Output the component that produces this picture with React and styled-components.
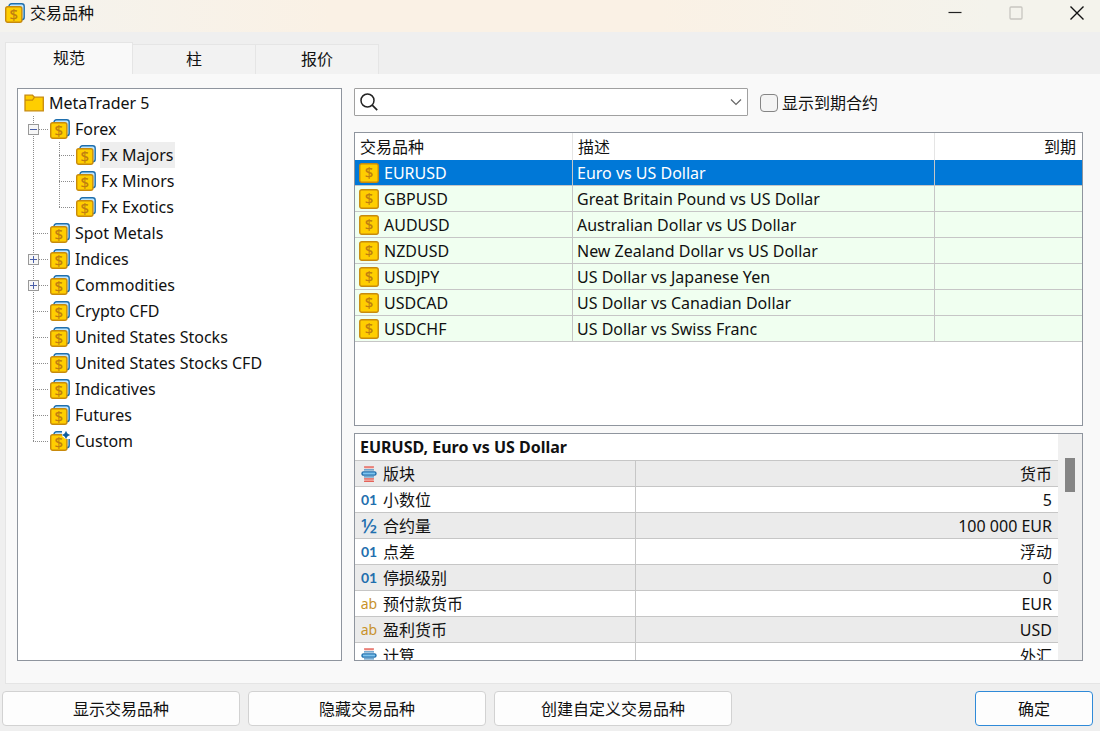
import { useState } from "react";
import styled, { createGlobalStyle, css } from "styled-components";

const colours = {
  TEXT: "#111111",
  WINDOW: "#efefef",
  PANEL: "#f9f9f9",
  WHITE: "#ffffff",
  FRAME: "#8f959e",
  LINE: "#c6c6c6",
  SOFT: "#e5e5e5",
  ROW: "#f0fff0",
  STRIPE: "#ebebeb",
  SELECTED: "#0078d7",
  GOLD: "#ffce00",
  GOLD_DARK: "#c88a0c",
  BLUE: "#1f6fae",
  RED: "#e0483e",
};

const fonts = `"Noto Sans", "Noto Sans CJK SC", sans-serif`;

const GlobalStyle = createGlobalStyle`
  * {
    box-sizing: border-box;
  }

  body {
    margin: 0;
    background: ${colours.WINDOW};
  }

  button, input, table {
    font: inherit;
    color: inherit;
  }
`;

const Window = styled.div`
  display: flex;
  flex-direction: column;
  height: 100vh;
  min-height: 600px;
  overflow: hidden;
  background: ${colours.WINDOW};
  color: ${colours.TEXT};
  font-family: ${fonts};
  font-size: 16px;
  line-height: 24px;
`;

const TitleBar = styled.header`
  display: flex;
  align-items: center;
  height: 32px;
  flex: none;
  padding: 0 0 6px 5px;
  background: linear-gradient(90deg, #f4f3ee 0%, #faf1e5 30%, #faf1e5 60%, #f4f3ec 90%);
`;

const Title = styled.h1`
  flex: 1;
  margin: 0 0 0 5px;
  font-size: 16px;
  font-weight: 400;
`;

const WindowButtons = styled.div`
  display: flex;
  gap: 15px;
`;

const WindowButton = styled.button`
  display: flex;
  align-items: center;
  justify-content: center;
  width: 46px;
  height: 26px;
  padding: 0;
  border: 0;
  background: none;
`;

const Tabs = styled.nav`
  display: flex;
  align-items: flex-end;
  flex: none;
  margin: 10px 0 0 5px;
`;

const Tab = styled.button`
  width: 123px;
  height: 30px;
  padding: 0 0 2px;
  border: 1px solid ${colours.SOFT};
  border-left-width: 0;
  border-bottom-width: 0;
  background: #f2f2f2;

  ${(props) =>
    props.$active &&
    css`
      width: 128px;
      height: 32px;
      border-left-width: 1px;
      background: ${colours.PANEL};
    `}
`;

const Page = styled.main`
  display: flex;
  flex: 1;
  gap: 12px;
  min-height: 0;
  margin-left: 5px;
  padding: 14px 17px 22px 11px;
  border: 1px solid ${colours.SOFT};
  border-width: 0 0 1px 1px;
  background: ${colours.PANEL};
`;

const Frame = styled.section`
  border: 1px solid ${colours.FRAME};
  background: ${colours.WHITE};
`;

const TreeFrame = styled(Frame)`
  flex: 0 0 325px;
  overflow: hidden;
`;

const Tree = styled.ul`
  margin: 0;
  padding: 1px 0 0 6px;
  list-style: none;
`;

const TreeRow = styled.li`
  display: flex;
  align-items: center;
  height: 26px;
`;

/* dotted connector: a vertical run at the left and a branch to the icon */
const Guide = styled.span`
  display: flex;
  align-items: center;
  align-self: stretch;
  width: 26px;
  padding-left: 4px;
  background-image: repeating-linear-gradient(180deg, #8c8c8c 0 1px, transparent 1px 2px),
    repeating-linear-gradient(90deg, #8c8c8c 0 1px, transparent 1px 2px);
  background-repeat: no-repeat;
  background-position: 9px 0, 9px 13px;
  background-size: 1px ${(props) => (props.$last ? "50%" : "100%")},
    ${(props) => (props.$branch ? "15px 1px" : "0 0")};
`;

const Expander = styled.button`
  display: flex;
  width: 11px;
  height: 11px;
  padding: 0;
  border: 1px solid #999999;
  background: #f7f7f7;
`;

const TreeLabel = styled.span`
  margin-left: 4px;
  padding: 1px 1px;
  background: ${(props) => (props.$selected ? "#eeeeee" : "none")};
`;

const Column = styled.div`
  display: flex;
  flex: 1;
  flex-direction: column;
  min-width: 0;
`;

const Toolbar = styled.div`
  display: flex;
  align-items: center;
  gap: 12px;
  margin-bottom: 16px;
`;

const ComboBox = styled.div`
  display: flex;
  align-items: center;
  flex: 0 1 394px;
  height: 28px;
  padding-left: 5px;
  border: 1px solid #a0a0a0;
  border-radius: 1px;
  background: ${colours.WHITE};
`;

const SearchInput = styled.input`
  flex: 1;
  min-width: 0;
  height: 24px;
  border: 0;
  outline: 0;
  background: none;
`;

const DropButton = styled.button`
  display: flex;
  align-items: center;
  justify-content: center;
  width: 22px;
  height: 24px;
  padding: 0;
  border: 0;
  background: none;
`;

const CheckLabel = styled.label`
  display: flex;
  align-items: center;
  gap: 4px;
  padding-top: 2px;
`;

const CheckBox = styled.input`
  appearance: none;
  width: 18px;
  height: 18px;
  margin: 0;
  border: 1px solid #858585;
  border-radius: 4px;
  background: #f4f4f4;

  &:checked {
    background: ${colours.SELECTED};
  }
`;

const ListFrame = styled(Frame)`
  flex: 0 0 294px;
  overflow: hidden;
  margin-bottom: 7px;
`;

const SymbolTable = styled.table`
  width: 100%;
  table-layout: fixed;
  border-collapse: separate;
  border-spacing: 0;
`;

const HeadCell = styled.th`
  width: ${(props) => props.$width || "auto"};
  height: 27px;
  padding: 0 6px 0 5px;
  border-right: 1px solid ${colours.SOFT};
  font-weight: 400;
  line-height: 24px;
  text-align: ${(props) => props.$align || "left"};

  &:last-child {
    border-right: 0;
  }
`;

const SymbolRow = styled.tr`
  background: ${(props) => (props.$selected ? colours.SELECTED : colours.ROW)};
  color: ${(props) => (props.$selected ? colours.WHITE : "inherit")};
`;

const Cell = styled.td`
  height: 26px;
  padding: 0 4px;
  border: 1px solid ${colours.LINE};
  border-width: 0 1px 1px 0;
  line-height: 24px;

  &:last-child {
    border-right: 0;
  }
`;

const IconText = styled.span`
  display: flex;
  align-items: center;
  gap: 5px;
`;

const DetailsFrame = styled(Frame)`
  display: flex;
  flex: 1;
  min-height: 0;
`;

const DetailsScroll = styled.div`
  flex: 1;
  overflow-y: auto;
  scrollbar-width: none;
`;

const DetailsTable = styled.table`
  width: 100%;
  table-layout: fixed;
  border-collapse: separate;
  border-spacing: 0;

  caption {
    height: 27px;
    padding: 1px 5px;
    border-bottom: 1px solid ${colours.LINE};
    font-weight: 700;
    text-align: left;
  }

  tr:nth-child(odd) {
    background: ${colours.STRIPE};
  }
`;

const DetailName = styled.th`
  width: 40%;
  height: 26px;
  padding: 1px 5px 0;
  border: 1px solid ${colours.LINE};
  border-width: 0 1px 1px 0;
  font-weight: 400;
  line-height: 24px;
  text-align: left;
`;

const DetailValue = styled.td`
  padding: 1px 6px 0 5px;
  border-bottom: 1px solid ${colours.LINE};
  line-height: 24px;
  text-align: right;
`;

const TypeMark = styled.span`
  display: flex;
  align-items: center;
  justify-content: center;
  width: 18px;
  color: ${(props) => props.$colour};
  font-family: ${(props) => props.$family || fonts};
  font-size: ${(props) => props.$size};
  font-weight: ${(props) => props.$weight || 400};
`;

const ScrollTrack = styled.div`
  width: 24px;
  padding: 24px 7px 0 7px;
  background: #f0f0f0;
`;

const ScrollThumb = styled.div`
  height: 34px;
  background: #858585;
`;

const Footer = styled.footer`
  display: flex;
  flex: none;
  gap: 8px;
  padding: 7px 7px 5px 2px;
`;

const Button = styled.button`
  flex: 0 1 238px;
  height: 35px;
  padding: 0;
  border: 1px solid #d2d2d2;
  border-radius: 4px;
  background: #fdfdfd;
`;

const OkButton = styled(Button)`
  flex-basis: 118px;
  margin-left: auto;
  border-color: #2f8ad8;
`;

const Dollar = ({ x, y }) => (
  <text x={x} y={y} textAnchor="middle" fontFamily="Noto Sans" fontSize="15" fontWeight="500" fill="#c07f10">
    $
  </text>
);

const SymbolIcon = () => (
  <svg width="20" height="20" viewBox="0 0 20 20" aria-hidden="true">
    <rect x="0.75" y="0.75" width="18.5" height="18.5" rx="2" fill={colours.GOLD} stroke={colours.GOLD_DARK} strokeWidth="1.4" />
    <Dollar x="10" y="15.3" />
  </svg>
);

const GroupIcon = ({ custom }) => (
  <svg width="20" height="20" viewBox="0 0 20 20" aria-hidden="true">
    <rect x="4" y="0.7" width="15.2" height="16" rx="2.5" fill="#bfe6ff" stroke={colours.BLUE} strokeWidth="1.4" />
    <rect x="0.7" y="3.7" width="16.2" height="15.6" rx="2" fill={colours.GOLD} stroke={colours.GOLD_DARK} strokeWidth="1.4" />
    <Dollar x="8.8" y="16.8" />
    {custom && (
      <>
        <path d="M12 0h8v8h-4.5L12 5z" fill={colours.WHITE} />
        <path d="M16 0.5l1.2 2.3 2.3 1.2-2.3 1.2L16 7.5l-1.2-2.3L12.5 4l2.3-1.2z" fill="#0c5c9c" stroke="#0c5c9c" strokeWidth="0.6" />
      </>
    )}
  </svg>
);

const FolderIcon = () => (
  <svg width="20" height="20" viewBox="0 0 20 20" aria-hidden="true">
    <path d="M1 2.2h7.5l2 2h8.8v13.6H1z" fill={colours.GOLD} stroke={colours.GOLD_DARK} strokeWidth="1.3" />
    <path d="M1 7.2h7.5l2-3" fill="none" stroke={colours.GOLD_DARK} strokeWidth="1.2" />
  </svg>
);

const SectorIcon = () => (
  <svg width="16" height="16" viewBox="0 0 16 16" aria-hidden="true">
    <path d="M3.5 0.5h9v2h-9zM3.5 12.5h9v3h-9z" fill="#f4b8b2" />
    <path d="M3 1h10M3 12.9h10M3 15.3h10" stroke={colours.RED} strokeWidth="1" />
    <path d="M3 3.8h10M3 10.8h10" stroke="#4a90c4" strokeWidth="1.2" />
    <rect x="1" y="5.9" width="14" height="3.2" rx="1.6" fill="#7fc4ee" stroke={colours.BLUE} strokeWidth="1.4" />
  </svg>
);

const marks = {
  sector: <TypeMark><SectorIcon /></TypeMark>,
  number: <TypeMark $colour={colours.BLUE} $size="14px" $weight="700" $family={`Lato, sans-serif`}>01</TypeMark>,
  fraction: <TypeMark $colour={colours.BLUE} $size="20px" $weight="500">½</TypeMark>,
  text: <TypeMark $colour="#c8922b" $size="14px">ab</TypeMark>,
};

const treeItems = [
  { label: "Forex", expander: "minus" },
  { label: "Fx Majors", child: true },
  { label: "Fx Minors", child: true },
  { label: "Fx Exotics", child: true, last: true },
  { label: "Spot Metals" },
  { label: "Indices", expander: "plus" },
  { label: "Commodities", expander: "plus" },
  { label: "Crypto CFD" },
  { label: "United States Stocks" },
  { label: "United States Stocks CFD" },
  { label: "Indicatives" },
  { label: "Futures" },
  { label: "Custom", custom: true, last: true },
];

const symbols = [
  ["EURUSD", "Euro vs US Dollar"],
  ["GBPUSD", "Great Britain Pound vs US Dollar"],
  ["AUDUSD", "Australian Dollar vs US Dollar"],
  ["NZDUSD", "New Zealand Dollar vs US Dollar"],
  ["USDJPY", "US Dollar vs Japanese Yen"],
  ["USDCAD", "US Dollar vs Canadian Dollar"],
  ["USDCHF", "US Dollar vs Swiss Franc"],
];

const details = [
  ["sector", "版块", "货币"],
  ["number", "小数位", "5"],
  ["fraction", "合约量", "100 000 EUR"],
  ["number", "点差", "浮动"],
  ["number", "停损级别", "0"],
  ["text", "预付款货币", "EUR"],
  ["text", "盈利货币", "USD"],
  ["sector", "计算", "外汇"],
];

const SymbolTree = () => {
  const [selected, setSelected] = useState("Fx Majors");
  return (
    <TreeFrame>
      <Tree>
        <TreeRow>
          <FolderIcon />
          <TreeLabel>MetaTrader 5</TreeLabel>
        </TreeRow>
        {treeItems.map((item) => (
          <TreeRow key={item.label} onClick={() => setSelected(item.label)}>
            {item.child && <Guide />}
            <Guide $branch $last={item.last}>
              {item.expander && (
                <Expander aria-label={item.label}>
                  <svg width="9" height="9" viewBox="0 0 9 9">
                    <path d={item.expander === "plus" ? "M1 4.5h7M4.5 1v7" : "M1 4.5h7"} stroke="#4a5fa8" />
                  </svg>
                </Expander>
              )}
            </Guide>
            <GroupIcon custom={item.custom} />
            <TreeLabel $selected={item.label === selected}>{item.label}</TreeLabel>
          </TreeRow>
        ))}
      </Tree>
    </TreeFrame>
  );
};

const SymbolList = () => {
  const [selected, setSelected] = useState("EURUSD");
  return (
    <ListFrame>
      <SymbolTable>
        <thead>
          <tr>
            <HeadCell $width="218px">交易品种</HeadCell>
            <HeadCell>描述</HeadCell>
            <HeadCell $width="147px" $align="right">到期</HeadCell>
          </tr>
        </thead>
        <tbody>
          {symbols.map(([name, description]) => (
            <SymbolRow key={name} $selected={name === selected} onClick={() => setSelected(name)}>
              <Cell>
                <IconText>
                  <SymbolIcon />
                  {name}
                </IconText>
              </Cell>
              <Cell>{description}</Cell>
              <Cell />
            </SymbolRow>
          ))}
        </tbody>
      </SymbolTable>
    </ListFrame>
  );
};

const SymbolDetails = () => (
  <DetailsFrame>
    <DetailsScroll>
      <DetailsTable>
        <caption>EURUSD, Euro vs US Dollar</caption>
        <tbody>
          {details.map(([type, name, value]) => (
            <tr key={name}>
              <DetailName scope="row">
                <IconText>
                  {marks[type]}
                  {name}
                </IconText>
              </DetailName>
              <DetailValue>{value}</DetailValue>
            </tr>
          ))}
        </tbody>
      </DetailsTable>
    </DetailsScroll>
    <ScrollTrack>
      <ScrollThumb />
    </ScrollTrack>
  </DetailsFrame>
);

export default function App() {
  const [tab, setTab] = useState("规范");

  return (
    <Window>
      <GlobalStyle />
      <TitleBar>
        <GroupIcon />
        <Title>交易品种</Title>
        <WindowButtons>
          <WindowButton aria-label="最小化">
            <svg width="14" height="14"><path d="M0.5 6.5h13" stroke="#222222" strokeWidth="1.2" /></svg>
          </WindowButton>
          <WindowButton aria-label="最大化" disabled>
            <svg width="14" height="14"><rect x="1" y="1" width="12" height="12" rx="1" fill="none" stroke="#c8c6c0" strokeWidth="1.3" /></svg>
          </WindowButton>
          <WindowButton aria-label="关闭">
            <svg width="14" height="14"><path d="M0.5 0.5l13 13M13.5 0.5l-13 13" stroke="#111111" strokeWidth="1.4" /></svg>
          </WindowButton>
        </WindowButtons>
      </TitleBar>
      <Tabs>
        {["规范", "柱", "报价"].map((name) => (
          <Tab key={name} $active={name === tab} onClick={() => setTab(name)}>
            {name}
          </Tab>
        ))}
      </Tabs>
      <Page>
        <SymbolTree />
        <Column>
          <Toolbar>
            <ComboBox>
              <svg width="18" height="18" viewBox="0 0 18 18" aria-hidden="true">
                <circle cx="7.5" cy="7.5" r="6.5" fill="none" stroke="#222222" strokeWidth="1.5" />
                <path d="M12.2 12.2l5 5" stroke="#222222" strokeWidth="1.7" />
              </svg>
              <SearchInput aria-label="搜索" />
              <DropButton aria-label="展开">
                <svg width="12" height="8"><path d="M1 1.5l5 5 5-5" fill="none" stroke="#666666" strokeWidth="1.2" /></svg>
              </DropButton>
            </ComboBox>
            <CheckLabel>
              <CheckBox type="checkbox" />
              显示到期合约
            </CheckLabel>
          </Toolbar>
          <SymbolList />
          <SymbolDetails />
        </Column>
      </Page>
      <Footer>
        <Button>显示交易品种</Button>
        <Button>隐藏交易品种</Button>
        <Button>创建自定义交易品种</Button>
        <OkButton>确定</OkButton>
      </Footer>
    </Window>
  );
}
